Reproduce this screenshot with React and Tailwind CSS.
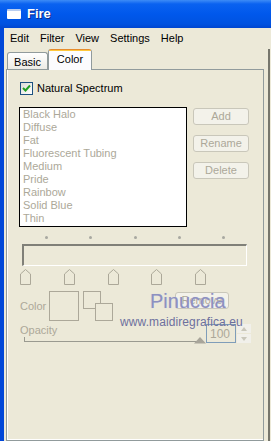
import React from "react";

const items = ["Black Halo", "Diffuse", "Fat", "Fluorescent Tubing", "Medium", "Pride", "Rainbow", "Solid Blue", "Thin"];

function Marker() {
  return (
    <svg width="11" height="16" viewBox="0 0 11 16">
      <path d="M0.5 15.5 V5 L5.5 0.5 L10.5 5 V15.5 Z" fill="none" stroke="#aca899" strokeWidth="1" />
    </svg>
  );
}

function Btn({ children, className = "" }) {
  return (
    <div className={"h-[17px] rounded-[3px] border border-[#c9c7ba] bg-[#f3f2ea] flex items-center justify-center text-[#aca899] " + className}>
      {children}
    </div>
  );
}

export default function App() {
  return (
    <div className="w-[271px] h-[441px] bg-[#ece9d8] relative overflow-hidden font-['Liberation_Sans',Arial,sans-serif] text-[11px] text-black">
      {/* Title bar */}
      <div className="h-[28px] flex items-center pl-[7px] bg-[linear-gradient(to_bottom,#3d8cf6_0px,#0a62f0_4px,#0058ec_14px,#0052e0_24px,#0046d0_28px)]">
        <div className="w-[14px] h-[10px] bg-white border-t-[2px] border-[#b8cdf0] rounded-[1px]" />
        <span className="ml-[6px] text-white font-bold text-[13px] [text-shadow:1px_1px_0_#0a2a8a]">Fire</span>
      </div>

      <div className="flex h-[413px]">
        <div className="w-[4px] bg-[#0047d8]" />
        <div className="flex-1 flex flex-col">
          {/* Menu */}
          <div className="h-[21px] flex items-center pl-[6px] gap-[11px]">
            <span>Edit</span>
            <span>Filter</span>
            <span>View</span>
            <span>Settings</span>
            <span>Help</span>
          </div>

          <div className="flex flex-1">
            <div className="ml-[2px] w-[258px] flex flex-col">
              {/* Tabs */}
              <div className="h-[20px] flex items-end relative z-10">
                <div className="ml-[1px] w-[41px] h-[17px] border border-b-0 border-[#919b9c] rounded-t-[3px] bg-[linear-gradient(to_bottom,#ffffff,#ecebe5)] flex items-center justify-center pt-[2px]">
                  Basic
                </div>
                <div className="w-[44px] h-[21px] -mb-[1px] border-x border-[#919b9c] rounded-t-[3px] bg-[#fcfcfe] flex flex-col">
                  <div className="h-[3px] bg-[#ffc83c] rounded-t-[2px] border-t border-[#e68b2c]" />
                  <div className="flex-1 flex items-center justify-center pb-[3px]">Color</div>
                </div>
              </div>

              {/* Panel */}
              <div className="flex-1 border border-[#919b9c] bg-[#ece9d8] shadow-[inset_1px_0_0_#ffffff,inset_0_-1px_0_#ffffff] flex flex-col pl-[13px] pt-[12px]">
                <div className="flex items-center gap-[4px] h-[13px]">
                  <div className="w-[13px] h-[13px] border border-[#1c5180] bg-[linear-gradient(135deg,#dcdcd6,#ffffff)] flex items-center justify-center">
                    <svg width="9" height="9" viewBox="0 0 9 9">
                      <path d="M1 4 L3.5 6.5 L8 1.5" fill="none" stroke="#21a121" strokeWidth="2" />
                    </svg>
                  </div>
                  <span>Natural Spectrum</span>
                </div>

                <div className="flex mt-[12px]">
                  <div className="-ml-[1px] w-[168px] h-[120px] border border-black bg-white pl-[3px] flex flex-col text-[#aca899] leading-[13px]">
                    {items.map((t) => (
                      <div key={t} className="h-[13px] whitespace-nowrap">{t}</div>
                    ))}
                  </div>
                  <div className="ml-[6px] mt-[1px] w-[56px] flex flex-col gap-[10px]">
                    <Btn>Add</Btn>
                    <Btn>Rename</Btn>
                    <Btn>Delete</Btn>
                  </div>
                </div>

                {/* dots */}
                <div className="flex mt-[9px] ml-[25px] gap-[41.25px]">
                  {[0, 1, 2, 3, 4].map((i) => (
                    <div key={i} className="w-[3px] h-[3px] rounded-full bg-[#a8a8a0]" />
                  ))}
                </div>

                {/* gradient bar */}
                <div className="mt-[5px] ml-[2px] w-[225px] h-[22px] border-t-[2px] border-l-[2px] border-[#808078] border-r border-b border-r-[#fffffe] border-b-[#fffffe] bg-[#ece9d8]" />

                {/* markers */}
                <div className="flex mt-[3px] gap-[32.75px]">
                  {[0, 1, 2, 3, 4].map((i) => (
                    <Marker key={i} />
                  ))}
                </div>

                {/* color row */}
                <div className="flex mt-[6px] h-[30px]">
                  <div className="w-[29px] flex items-center text-[#aca899]">Color</div>
                  <div className="w-[30px] h-[30px] border border-[#aca899]" />
                  <svg className="ml-[4px]" width="30" height="30" viewBox="0 0 30 30">
                    <rect x="0.5" y="0.5" width="17" height="17" fill="none" stroke="#aca899" />
                    <rect x="12.5" y="12.5" width="17" height="17" fill="#ece9d8" stroke="#aca899" />
                  </svg>
                  <Btn className="ml-[62px] mt-[1px] w-[54px]">Remove</Btn>
                </div>

                {/* opacity row */}
                <div className="flex mt-[3px] h-[20px]">
                  <div className="w-[186px] flex flex-col">
                    <div className="h-[12px] leading-[12px] text-[#aca899]">Opacity</div>
                    <svg width="186" height="8" viewBox="0 0 186 8">
                      <line x1="4.5" y1="1" x2="4.5" y2="5" stroke="#9a9a90" />
                      <line x1="4" y1="5.5" x2="180" y2="5.5" stroke="#9a9a90" />
                      <path d="M174 7.5 L180 1 L186 7.5 Z" fill="#a8a59a" />
                    </svg>
                  </div>
                  <div className="w-[30px] h-[19px] border border-[#7f9db9] bg-[#ece9d8] flex items-center pl-[3px] text-[12px] text-[#aca899]">
                    100
                  </div>
                  <div className="ml-[1px] w-[14px] h-[19px] flex flex-col gap-[1px]">
                    <div className="flex-1 bg-[#f1f0ea] flex items-center justify-center">
                      <svg width="6" height="4" viewBox="0 0 6 4"><path d="M0 4 L3 0 L6 4 Z" fill="#c9c7ba" /></svg>
                    </div>
                    <div className="flex-1 bg-[#f1f0ea] flex items-center justify-center">
                      <svg width="6" height="4" viewBox="0 0 6 4"><path d="M0 0 L3 4 L6 0 Z" fill="#c9c7ba" /></svg>
                    </div>
                  </div>
                </div>
              </div>
            </div>
            <div className="w-[4px]" />
            <div className="w-[2px] bg-[#76766c] mt-[0px]" />
          </div>
        </div>
      </div>
      <div className="h-0" />

      {/* watermark */}
      <div className="absolute left-[150px] top-[290px] text-[20px] leading-[22px] text-[#8d90bf] [text-shadow:0_0_1px_#c8cae8]">Pinuccia</div>
      <div className="absolute left-[120px] top-[315px] text-[12px] leading-[14px] text-[#6d709e] tracking-[0.1px]">www.maidiregrafica.eu</div>
    </div>
  );
}
